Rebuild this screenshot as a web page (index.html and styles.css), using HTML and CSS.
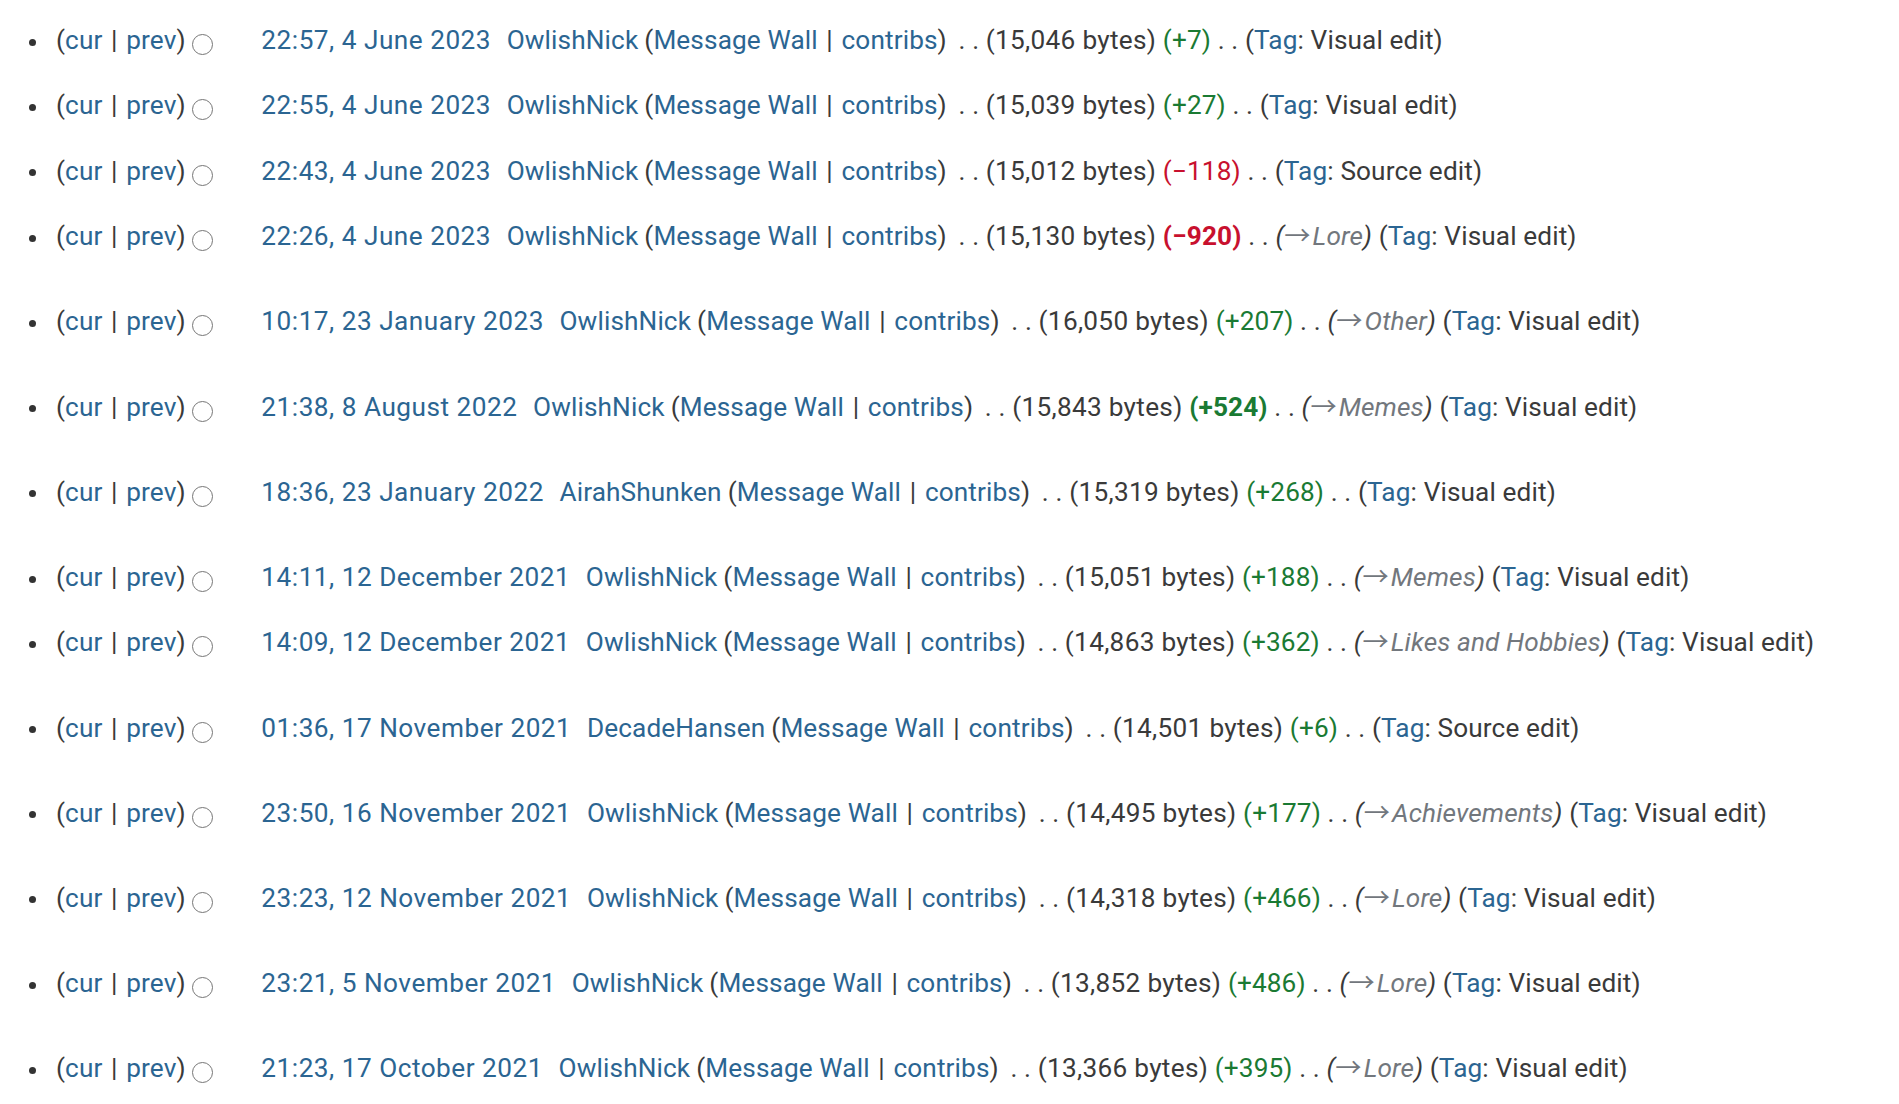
FILE: index.html
```html
<!DOCTYPE html>
<html lang="en">
<head>
  <meta charset="UTF-8" />
  <meta name="viewport" content="width=device-width, initial-scale=1.0"/>
  <title>Revision history</title>
  <link rel="stylesheet" href="styles.css">
</head>
<body>
  <ul class="history">
    <li><span class="links">(<a href="#">cur</a> <span class="pipe">|</span> <a href="#">prev</a>)</span> <span class="radio"></span><a class="date" href="#">22:57, 4 June 2023</a> <span class="user"><a href="#">OwlishNick</a><span class="tools">(<a href="#">Message Wall</a> <span class="pipe">|</span> <a href="#">contribs</a>)</span></span> <span class="sep">. .</span> <span class="size">(15,046 bytes)</span> <span class="pos">(+7)</span> <span class="sep">. .</span> <span>(<a href="#">Tag</a>: Visual edit)</span></li>
    <li><span class="links">(<a href="#">cur</a> <span class="pipe">|</span> <a href="#">prev</a>)</span> <span class="radio"></span><a class="date" href="#">22:55, 4 June 2023</a> <span class="user"><a href="#">OwlishNick</a><span class="tools">(<a href="#">Message Wall</a> <span class="pipe">|</span> <a href="#">contribs</a>)</span></span> <span class="sep">. .</span> <span class="size">(15,039 bytes)</span> <span class="pos">(+27)</span> <span class="sep">. .</span> <span>(<a href="#">Tag</a>: Visual edit)</span></li>
    <li><span class="links">(<a href="#">cur</a> <span class="pipe">|</span> <a href="#">prev</a>)</span> <span class="radio"></span><a class="date" href="#">22:43, 4 June 2023</a> <span class="user"><a href="#">OwlishNick</a><span class="tools">(<a href="#">Message Wall</a> <span class="pipe">|</span> <a href="#">contribs</a>)</span></span> <span class="sep">. .</span> <span class="size">(15,012 bytes)</span> <span class="neg">(−118)</span> <span class="sep">. .</span> <span>(<a href="#">Tag</a>: Source edit)</span></li>
    <li><span class="links">(<a href="#">cur</a> <span class="pipe">|</span> <a href="#">prev</a>)</span> <span class="radio"></span><a class="date" href="#">22:26, 4 June 2023</a> <span class="user"><a href="#">OwlishNick</a><span class="tools">(<a href="#">Message Wall</a> <span class="pipe">|</span> <a href="#">contribs</a>)</span></span> <span class="sep">. .</span> <span class="size">(15,130 bytes)</span> <strong class="neg">(−920)</strong> <span class="sep">. .</span> <span class="comment">(<a href="#"><span class="arrow">→</span>Lore</a>)</span> <span>(<a href="#">Tag</a>: Visual edit)</span></li>
    <li class="tall"><span class="links">(<a href="#">cur</a> <span class="pipe">|</span> <a href="#">prev</a>)</span> <span class="radio"></span><a class="date" href="#">10:17, 23 January 2023</a> <span class="user"><a href="#">OwlishNick</a><span class="tools">(<a href="#">Message Wall</a> <span class="pipe">|</span> <a href="#">contribs</a>)</span></span> <span class="sep">. .</span> <span class="size">(16,050 bytes)</span> <span class="pos">(+207)</span> <span class="sep">. .</span> <span class="comment">(<a href="#"><span class="arrow">→</span>Other</a>)</span> <span>(<a href="#">Tag</a>: Visual edit)</span></li>
    <li class="tall"><span class="links">(<a href="#">cur</a> <span class="pipe">|</span> <a href="#">prev</a>)</span> <span class="radio"></span><a class="date" href="#">21:38, 8 August 2022</a> <span class="user"><a href="#">OwlishNick</a><span class="tools">(<a href="#">Message Wall</a> <span class="pipe">|</span> <a href="#">contribs</a>)</span></span> <span class="sep">. .</span> <span class="size">(15,843 bytes)</span> <strong class="pos">(+524)</strong> <span class="sep">. .</span> <span class="comment">(<a href="#"><span class="arrow">→</span>Memes</a>)</span> <span>(<a href="#">Tag</a>: Visual edit)</span></li>
    <li class="tall"><span class="links">(<a href="#">cur</a> <span class="pipe">|</span> <a href="#">prev</a>)</span> <span class="radio"></span><a class="date" href="#">18:36, 23 January 2022</a> <span class="user"><a href="#">AirahShunken</a><span class="tools">(<a href="#">Message Wall</a> <span class="pipe">|</span> <a href="#">contribs</a>)</span></span> <span class="sep">. .</span> <span class="size">(15,319 bytes)</span> <span class="pos">(+268)</span> <span class="sep">. .</span> <span>(<a href="#">Tag</a>: Visual edit)</span></li>
    <li class="tall"><span class="links">(<a href="#">cur</a> <span class="pipe">|</span> <a href="#">prev</a>)</span> <span class="radio"></span><a class="date" href="#">14:11, 12 December 2021</a> <span class="user"><a href="#">OwlishNick</a><span class="tools">(<a href="#">Message Wall</a> <span class="pipe">|</span> <a href="#">contribs</a>)</span></span> <span class="sep">. .</span> <span class="size">(15,051 bytes)</span> <span class="pos">(+188)</span> <span class="sep">. .</span> <span class="comment">(<a href="#"><span class="arrow">→</span>Memes</a>)</span> <span>(<a href="#">Tag</a>: Visual edit)</span></li>
    <li><span class="links">(<a href="#">cur</a> <span class="pipe">|</span> <a href="#">prev</a>)</span> <span class="radio"></span><a class="date" href="#">14:09, 12 December 2021</a> <span class="user"><a href="#">OwlishNick</a><span class="tools">(<a href="#">Message Wall</a> <span class="pipe">|</span> <a href="#">contribs</a>)</span></span> <span class="sep">. .</span> <span class="size">(14,863 bytes)</span> <span class="pos">(+362)</span> <span class="sep">. .</span> <span class="comment">(<a href="#"><span class="arrow">→</span>Likes and Hobbies</a>)</span> <span>(<a href="#">Tag</a>: Visual edit)</span></li>
    <li class="tall"><span class="links">(<a href="#">cur</a> <span class="pipe">|</span> <a href="#">prev</a>)</span> <span class="radio"></span><a class="date" href="#">01:36, 17 November 2021</a> <span class="user"><a href="#">DecadeHansen</a><span class="tools">(<a href="#">Message Wall</a> <span class="pipe">|</span> <a href="#">contribs</a>)</span></span> <span class="sep">. .</span> <span class="size">(14,501 bytes)</span> <span class="pos">(+6)</span> <span class="sep">. .</span> <span>(<a href="#">Tag</a>: Source edit)</span></li>
    <li class="tall"><span class="links">(<a href="#">cur</a> <span class="pipe">|</span> <a href="#">prev</a>)</span> <span class="radio"></span><a class="date" href="#">23:50, 16 November 2021</a> <span class="user"><a href="#">OwlishNick</a><span class="tools">(<a href="#">Message Wall</a> <span class="pipe">|</span> <a href="#">contribs</a>)</span></span> <span class="sep">. .</span> <span class="size">(14,495 bytes)</span> <span class="pos">(+177)</span> <span class="sep">. .</span> <span class="comment">(<a href="#"><span class="arrow">→</span>Achievements</a>)</span> <span>(<a href="#">Tag</a>: Visual edit)</span></li>
    <li class="tall"><span class="links">(<a href="#">cur</a> <span class="pipe">|</span> <a href="#">prev</a>)</span> <span class="radio"></span><a class="date" href="#">23:23, 12 November 2021</a> <span class="user"><a href="#">OwlishNick</a><span class="tools">(<a href="#">Message Wall</a> <span class="pipe">|</span> <a href="#">contribs</a>)</span></span> <span class="sep">. .</span> <span class="size">(14,318 bytes)</span> <span class="pos">(+466)</span> <span class="sep">. .</span> <span class="comment">(<a href="#"><span class="arrow">→</span>Lore</a>)</span> <span>(<a href="#">Tag</a>: Visual edit)</span></li>
    <li class="tall"><span class="links">(<a href="#">cur</a> <span class="pipe">|</span> <a href="#">prev</a>)</span> <span class="radio"></span><a class="date" href="#">23:21, 5 November 2021</a> <span class="user"><a href="#">OwlishNick</a><span class="tools">(<a href="#">Message Wall</a> <span class="pipe">|</span> <a href="#">contribs</a>)</span></span> <span class="sep">. .</span> <span class="size">(13,852 bytes)</span> <span class="pos">(+486)</span> <span class="sep">. .</span> <span class="comment">(<a href="#"><span class="arrow">→</span>Lore</a>)</span> <span>(<a href="#">Tag</a>: Visual edit)</span></li>
    <li class="tall"><span class="links">(<a href="#">cur</a> <span class="pipe">|</span> <a href="#">prev</a>)</span> <span class="radio"></span><a class="date" href="#">21:23, 17 October 2021</a> <span class="user"><a href="#">OwlishNick</a><span class="tools">(<a href="#">Message Wall</a> <span class="pipe">|</span> <a href="#">contribs</a>)</span></span> <span class="sep">. .</span> <span class="size">(13,366 bytes)</span> <span class="pos">(+395)</span> <span class="sep">. .</span> <span class="comment">(<a href="#"><span class="arrow">→</span>Lore</a>)</span> <span>(<a href="#">Tag</a>: Visual edit)</span></li>
  </ul>
</body>
</html>
```

FILE: styles.css
```css
* {margin: 0; padding: 0; box-sizing: border-box;}
body {
  background: #ffffff;
  color: #3a3a3a;
  font-family: Roboto, "Liberation Sans", sans-serif;
  font-size: 26.2px;
  letter-spacing: 0.12px;
}
a {
  color: #2b6592;
  text-decoration: none;
}
.history {
  list-style: none;
  padding-top: 21px;
}
.history li {
  line-height: 38px;
  margin-bottom: 27.4px;
  white-space: nowrap;
}
.history li.tall {
  padding-top: 19.8px;
}
.history li::before {
  content: "";
  display: inline-block;
  width: 7px;
  height: 7px;
  border-radius: 50%;
  background: #333333;
  margin: 0 20px 0 29px;
  vertical-align: middle;
}
.pipe {
  margin: 0 2px;
  color: #3a3a3a;
}
.radio {
  display: inline-block;
  width: 21px;
  height: 21px;
  border: 1.5px solid #767676;
  border-radius: 50%;
  vertical-align: -6px;
  margin-right: 48px;
}
.date {
  letter-spacing: 0.5px;
  margin-right: 9px;
}
.tools {
  margin-left: 6px;
}
.user {
  margin-right: 5px;
}
.size {
  letter-spacing: 0.3px;
}
.pos {
  color: #1a7a33;
}
.neg {
  color: #c8102e;
}
strong {
  font-weight: 700;
}
.comment {
  font-style: italic;
}
.comment a {
  color: #72777d;
}
.arrow {
  font-family: "Noto Sans CJK SC", "DejaVu Sans", sans-serif;
  font-style: normal;
  line-height: 0;
  margin-right: 2px;
}
```
